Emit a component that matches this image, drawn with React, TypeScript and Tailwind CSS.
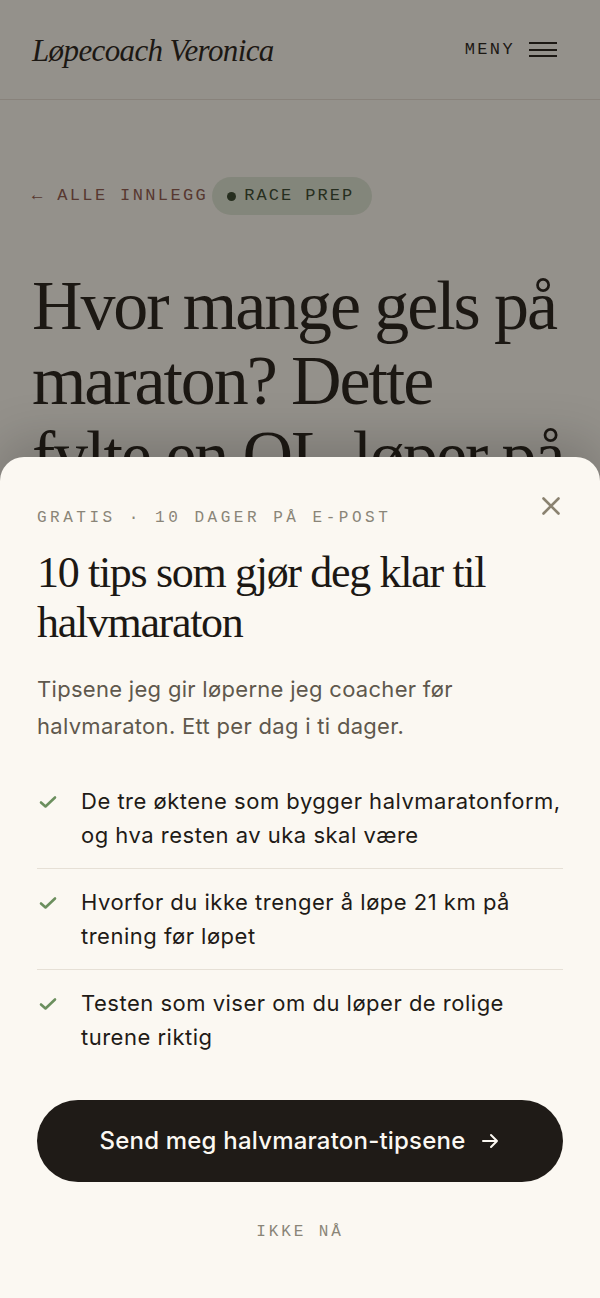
import React from "react";

const serif = { fontFamily: '"Liberation Serif", "Times New Roman", serif' };
const sans = { fontFamily: 'Inter, "Noto Sans", sans-serif' };
const mono = { fontFamily: '"Liberation Mono", "DejaVu Sans Mono", monospace' };

function Check() {
  return (
    <svg width="18" height="14" viewBox="0 0 18 14" fill="none" className="shrink-0">
      <path d="M2 7.5 L6.5 11.5 L16 2.5" stroke="#6b8f5e" strokeWidth="2.6" strokeLinecap="round" strokeLinejoin="round" />
    </svg>
  );
}

const items = [
  "De tre øktene som bygger halvmaratonform, og hva resten av uka skal være",
  "Hvorfor du ikke trenger å løpe 21 km på trening før løpet",
  "Testen som viser om du løper de rolige turene riktig",
];

export default function App() {
  return (
    <div className="relative h-[1298px] w-full overflow-hidden bg-[#faf7f1]">
      {/* Page behind */}
      <header className="flex h-[100px] items-center justify-between border-b border-[#e4ddd2] pl-8 pr-[43px]">
        <div className="text-[31px] italic tracking-[-0.02em] text-[#1c1814] pt-1" style={serif}>
          Løpecoach Veronica
        </div>
        <div className="flex items-center gap-[14px]">
          <span className="text-[17px] tracking-[0.14em] text-[#1c1814]" style={mono}>MENY</span>
          <div className="flex w-[28px] flex-col gap-[4.5px]">
            <span className="h-[2px] w-full bg-[#1c1814]" />
            <span className="h-[2px] w-full bg-[#1c1814]" />
            <span className="h-[2px] w-full bg-[#1c1814]" />
          </div>
        </div>
      </header>
      <main className="px-8">
        <div className="mt-[77px] flex items-center">
          <span className="text-[17px] tracking-[0.14em] text-[#8a5348]" style={mono}>
            ← ALLE INNLEGG
          </span>
          <span
            className="ml-[4px] flex h-[38px] items-center gap-[8px] rounded-full bg-[#dbe4d3] pl-[15px] pr-[18px] text-[17px] tracking-[0.12em] text-[#2f4229]"
            style={mono}
          >
            <span className="h-[9px] w-[9px] rounded-full bg-[#2f4229]" />
            RACE PREP
          </span>
        </div>
        <h1
          className="mt-[53px] text-[70px] leading-[75px] tracking-[-0.03em] text-[#1c1814]"
          style={serif}
        >
          Hvor mange gels på maraton? Dette
          <br />
          fylte en OL-løper på
        </h1>
      </main>

      {/* Scrim */}
      <div className="absolute inset-0 bg-[rgba(28,24,20,0.46)]" />

      {/* Bottom sheet */}
      <div className="absolute inset-x-0 bottom-0 top-[457px] rounded-t-[24px] bg-[#fbf8f2] px-[37px] pt-[51px] shadow-[0_-16px_50px_rgba(0,0,0,0.18)]">
        <button className="absolute right-[37px] top-[37px] flex h-[24px] w-[24px] items-center justify-center" aria-label="Lukk">
          <svg width="20" height="20" viewBox="0 0 20 20">
            <path d="M2.5 2.5 L17.5 17.5 M17.5 2.5 L2.5 17.5" stroke="#8a8270" strokeWidth="2.6" strokeLinecap="round" />
          </svg>
        </button>
        <div className="h-[20px] text-[16px] leading-[20px] tracking-[0.22em] text-[#8a8578]" style={mono}>
          GRATIS · 10 DAGER PÅ E-POST
        </div>
        <h2 className="mt-[20px] text-[44px] leading-[50px] tracking-[-0.03em] text-[#1c1814]" style={serif}>
          10 tips som gjør deg klar til halvmaraton
        </h2>
        <p className="mt-[23px] text-[22px] leading-[37px] tracking-[0.3px] text-[#5f584d]" style={sans}>
          Tipsene jeg gir løperne jeg coacher før halvmaraton. Ett per dag i ti dager.
        </p>
        <ul className="mt-[23px]">
          {items.map((t, i) => (
            <li
              key={i}
              className={`flex gap-[24px] py-[16px] ${i < items.length - 1 ? "border-b border-[#e6e0d6]" : ""}`}
            >
              <span className="mt-[11px] pl-[2px]">
                <Check />
              </span>
              <span className="text-[22px] leading-[34px] tracking-[0.5px] text-[#1f1b17]" style={sans}>
                {t}
              </span>
            </li>
          ))}
        </ul>
        <button
          className="mt-[30px] flex h-[82px] w-full items-center justify-center gap-[15px] rounded-full bg-[#1f1b17] text-[24px] font-medium tracking-[0.2px] text-[#fbf8f2]"
          style={sans}
        >
          Send meg halvmaraton-tipsene
          <svg width="20" height="20" viewBox="0 0 20 20" fill="none">
            <path d="M3 10 H17 M11 4 L17 10 L11 16" stroke="#fbf8f2" strokeWidth="2" strokeLinecap="round" strokeLinejoin="round" />
          </svg>
        </button>
        <div className="mt-[38px] text-center text-[16px] tracking-[0.18em] text-[#8a8578]" style={mono}>
          IKKE NÅ
        </div>
      </div>
    </div>
  );
}
